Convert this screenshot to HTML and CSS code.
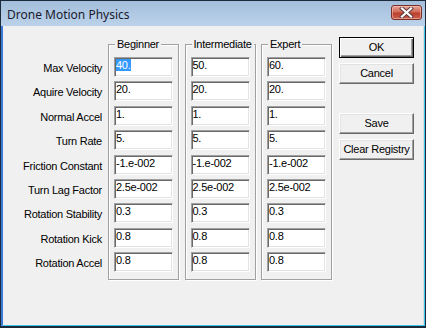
FILE: index.html
```html
<!DOCTYPE html>
<html lang="en">
<head>
  <meta charset="UTF-8" />
  <title>Drone Motion Physics</title>
  <link rel="stylesheet" href="styles.css">
</head>
<body>
  <div class="window">
    <div class="titlebar">
      <span class="title">Drone Motion Physics</span>
      <span class="close-btn">
        <svg width="15" height="11" viewBox="0 0 15 11">
          <path d="M3 1.5 L12 9.5 M12 1.5 L3 9.5" stroke="#5a3a3a" stroke-width="4" stroke-linecap="square" />
          <path d="M3 1.5 L12 9.5 M12 1.5 L3 9.5" stroke="#fff" stroke-width="2.2" stroke-linecap="square" />
        </svg>
      </span>
    </div>

    <div class="client">
      <div class="labels">
        <div class="label">Max Velocity</div>
        <div class="label">Aquire Velocity</div>
        <div class="label">Normal Accel</div>
        <div class="label">Turn Rate</div>
        <div class="label">Friction Constant</div>
        <div class="label">Turn Lag Factor</div>
        <div class="label">Rotation Stability</div>
        <div class="label">Rotation Kick</div>
        <div class="label">Rotation Accel</div>
      </div>

      <div class="groups">
        <div class="group">
          <span class="legend">Beginner</span>
          <div class="fields">
            <div class="edit"><span class="selected">40.</span></div>
            <div class="edit">20.</div>
            <div class="edit">1.</div>
            <div class="edit">5.</div>
            <div class="edit">-1.e-002</div>
            <div class="edit">2.5e-002</div>
            <div class="edit">0.3</div>
            <div class="edit">0.8</div>
            <div class="edit">0.8</div>
          </div>
        </div>
        <div class="group">
          <span class="legend">Intermediate</span>
          <div class="fields">
            <div class="edit">50.</div>
            <div class="edit">20.</div>
            <div class="edit">1.</div>
            <div class="edit">5.</div>
            <div class="edit">-1.e-002</div>
            <div class="edit">2.5e-002</div>
            <div class="edit">0.3</div>
            <div class="edit">0.8</div>
            <div class="edit">0.8</div>
          </div>
        </div>
        <div class="group">
          <span class="legend">Expert</span>
          <div class="fields">
            <div class="edit">60.</div>
            <div class="edit">20.</div>
            <div class="edit">1.</div>
            <div class="edit">5.</div>
            <div class="edit">-1.e-002</div>
            <div class="edit">2.5e-002</div>
            <div class="edit">0.3</div>
            <div class="edit">0.8</div>
            <div class="edit">0.8</div>
          </div>
        </div>
      </div>

      <div class="buttons">
        <div class="btn default">OK</div>
        <div class="btn cancel">Cancel</div>
        <div class="btn save">Save</div>
        <div class="btn clear">Clear Registry</div>
      </div>
    </div>
  </div>
</body>
</html>
```

FILE: styles.css
```css
body {
  margin: 0;
  background: #f0f0f0;
}

.window {
  width: 426px;
  height: 328px;
  box-sizing: border-box;
  border: 1px solid #1c2a3a;
  border-bottom-width: 2px;
  display: flex;
  flex-direction: column;
  font-family: "Liberation Sans", Arial, sans-serif;
}

.titlebar {
  height: 25px;
  display: flex;
  align-items: flex-start;
  justify-content: space-between;
  background: linear-gradient(#a3bedb, #bcd2ea);
  padding-left: 6px;
}

.title {
  font-family: "Noto Sans", sans-serif;
  font-size: 12px;
  line-height: 16px;
  margin-top: 6px;
  color: #1a1a2e;
}

.close-btn {
  width: 31px;
  height: 15px;
  margin: 4px 3px 0 0;
  box-sizing: border-box;
  border: 1px solid #7a2e2a;
  border-radius: 3px;
  background: linear-gradient(#e7a496, #d06a58 45%, #bb3f2e 55%, #c9614c);
  box-shadow: inset 0 0 0 1px rgba(255, 210, 200, 0.5);
  display: flex;
  align-items: center;
  justify-content: center;
}

.close-btn svg {
  display: block;
}

.client {
  flex: 1;
  display: flex;
  align-items: flex-start;
  background: #f0f0f0;
  border-left: 2px solid #3a7ad6;
  border-right: 1px solid #3fc6ef;
  border-bottom: 1px solid #3fc6ef;
  box-shadow: inset -1px 0 #dcdcdc;
  font-size: 11px;
  letter-spacing: -0.25px;
  color: #000;
}

.labels {
  width: 99px;
  margin-top: 31px;
  display: flex;
  flex-direction: column;
  gap: 4.375px;
}

.label {
  height: 20px;
  line-height: 20px;
  padding-top: 1px;
  box-sizing: border-box;
  text-align: right;
}

.groups {
  display: flex;
  gap: 5.5px;
  margin: 18px 0 0 6px;
}

.group {
  width: 71px;
  height: 236px;
  box-sizing: border-box;
  border: 1px solid #a0a0a0;
  box-shadow: 1px 1px 0 #fff, inset 1px 1px 0 #fff;
  padding-left: 5px;
}

.legend {
  display: table;
  margin: -7px 0 0 1px;
  padding: 0 2px;
  line-height: 13px;
  background: #f0f0f0;
}

.fields {
  margin-top: 6px;
  display: flex;
  flex-direction: column;
  gap: 4.375px;
}

.edit {
  width: 59px;
  height: 20px;
  box-sizing: border-box;
  background: #fff;
  border: 1px solid;
  border-color: #a0a0a0 #fff #fff #a0a0a0;
  box-shadow: inset 1px 1px #696969, inset -1px -1px #e3e3e3;
  padding: 1px 0 0 1px;
  line-height: 13px;
  white-space: nowrap;
}

.selected {
  background: #3399ff;
  color: #fff;
}

.buttons {
  margin: 11px 0 0 7px;
  display: flex;
  flex-direction: column;
}

.btn {
  width: 75px;
  height: 21px;
  box-sizing: border-box;
  border: 1px solid;
  border-color: #fff #696969 #696969 #fff;
  box-shadow: inset -1px -1px #a0a0a0, inset 1px 1px #e3e3e3;
  text-align: center;
  line-height: 19px;
}

.btn.default {
  border-color: #000;
  box-shadow: inset 1px 1px #fff, inset -1px -1px #696969, inset -2px -2px #a0a0a0;
}

.btn.cancel {
  margin-top: 5px;
}

.btn.save {
  margin-top: 29px;
}

.btn.clear {
  margin-top: 5px;
}
```
